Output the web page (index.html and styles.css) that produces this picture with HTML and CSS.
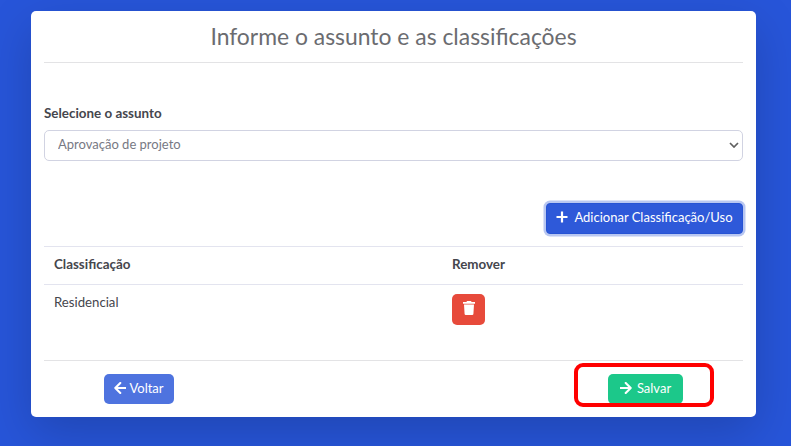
FILE: index.html
```html
<!DOCTYPE html>
<html lang="pt-br">
<head>
    <meta charset="UTF-8">
    <meta name="viewport" content="width=device-width, initial-scale=1.0">
    <title>Assunto e classificações</title>
    <link rel="stylesheet" href="styles.css">
</head>
<body>
    <div class="card">
        <h1 class="title">Informe o assunto e as classificações</h1>

        <div class="form-group">
            <label class="label" for="assunto">Selecione o assunto</label>
            <div class="select-wrap">
                <select class="select" id="assunto">
                    <option>Aprovação de projeto</option>
                </select>
                <svg class="chevron" viewBox="0 0 10 6"><path d="M1 1l4 4 4-4"/></svg>
            </div>
        </div>

        <div class="toolbar">
            <button class="btn btn-add">
                <svg class="icon icon-plus" viewBox="0 0 12 12"><path d="M6 .5v11M.5 6h11"/></svg>
                <span>Adicionar Classificação/Uso</span>
            </button>
        </div>

        <table class="table">
            <thead>
                <tr><th class="col-name">Classificação</th><th>Remover</th></tr>
            </thead>
            <tbody>
                <tr>
                    <td>Residencial</td>
                    <td>
                        <button class="btn btn-remove" aria-label="Remover">
                            <svg class="icon-trash" viewBox="0 0 12 14"><path d="M4 0h4l.6 1H12v1.7H0V1h3.4zM1 3.6h10L10.4 12.9a1.2 1.2 0 0 1-1.2 1.1H2.8a1.2 1.2 0 0 1-1.2-1.1z"/></svg>
                        </button>
                    </td>
                </tr>
            </tbody>
        </table>

        <div class="footer">
            <button class="btn btn-back">
                <svg class="icon" viewBox="0 0 12 12"><path d="M6.3 1L1.3 6l5 5M1.5 6h10"/></svg>
                <span>Voltar</span>
            </button>
            <div class="save-area">
                <button class="btn btn-save">
                    <svg class="icon" viewBox="0 0 12 12"><path d="M5.7 1l5 5-5 5M10.5 6H.5"/></svg>
                    <span>Salvar</span>
                </button>
                <div class="highlight"></div>
            </div>
        </div>
    </div>
</body>
</html>
```

FILE: styles.css
```css
* { box-sizing: border-box; }
body {
    margin: 0;
    padding: 11px 35px 29px 31px;
    height: 446px;
    overflow: hidden;
    background: #2755d9;
    font-family: Lato, sans-serif;
    font-size: 13px;
    color: #45464d;
}
.card {
    height: 406px;
    padding: 0 13px;
    background: white;
    border-radius: 5px;
    box-shadow: 0 16px 48px rgba(0, 0, 0, 0.175);
}
.title {
    margin: 0;
    height: 52px;
    border-bottom: 1px solid #e3e3e5;
    font-size: 22.9px;
    line-height: 51px;
    font-weight: 400;
    text-align: center;
    color: #6b6c70;
}
.form-group { padding-top: 40px; }
.label {
    display: block;
    height: 27px;
    line-height: 20px;
    font-size: 13.4px;
    font-weight: 700;
}
.select-wrap { position: relative; }
.select {
    display: block;
    appearance: none;
    width: 100%;
    height: 31px;
    padding: 0 13px 3px;
    border: 1px solid #d1d3e2;
    border-radius: 5px;
    background: white;
    font: inherit;
    color: #777984;
}
.chevron {
    position: absolute;
    right: 4px;
    top: 12px;
    width: 10px;
    height: 6px;
    fill: none;
    stroke: #606060;
    stroke-width: 1.7;
}
.btn {
    display: inline-flex;
    align-items: center;
    justify-content: center;
    padding: 0;
    border: none;
    border-radius: 5px;
    font: inherit;
    color: white;
    white-space: nowrap;
}
.icon {
    width: 12px;
    height: 12px;
    fill: none;
    stroke: white;
    stroke-width: 2.1;
    stroke-linecap: round;
    stroke-linejoin: round;
}
.icon-plus { stroke-width: 2.2; stroke-linecap: butt; }
.toolbar {
    display: flex;
    justify-content: flex-end;
    padding: 42px 0 12px;
}
.btn-add {
    width: 197px;
    height: 31px;
    gap: 6px;
    padding-bottom: 3px;
    border: 1px solid #2653d4;
    background: #2e59d9;
    border-radius: 4px;
    box-shadow: 0 0 0 2.5px #b9c7f1;
}
.table {
    width: 100%;
    border-collapse: collapse;
    table-layout: fixed;
}
.table th, .table td {
    padding: 0 9px;
    border-top: 1px solid #e3e4ef;
    text-align: left;
    vertical-align: top;
}
.table th {
    height: 38px;
    line-height: 35px;
    font-size: 13.4px;
}
.table td { height: 75px; line-height: 35px; }
.table th:first-child, .table td:first-child { padding-left: 10px; }
.table td:first-child { font-size: 13.2px; }
.col-name { width: 399px; }
.btn-remove {
    width: 33px;
    height: 31px;
    margin-top: 9px;
    padding-bottom: 3px;
    background: #e74a3b;
    vertical-align: top;
}
.icon-trash { width: 12px; height: 14px; fill: white; }
.footer {
    display: flex;
    justify-content: space-between;
    padding: 13px 60px 0;
    border-top: 1px solid #e3e3e5;
}
.btn-back {
    width: 70px;
    height: 30px;
    gap: 3px;
    padding-bottom: 1px;
    background: #4e73df;
}
.save-area { position: relative; }
.btn-save {
    width: 75px;
    height: 30px;
    gap: 5px;
    padding-bottom: 1px;
    background: #1cc88a;
}
/* red marker around the save button */
.highlight {
    position: absolute;
    left: -34px;
    top: -11px;
    width: 140px;
    height: 44px;
    border: 4px solid red;
    border-radius: 9px;
}
```
